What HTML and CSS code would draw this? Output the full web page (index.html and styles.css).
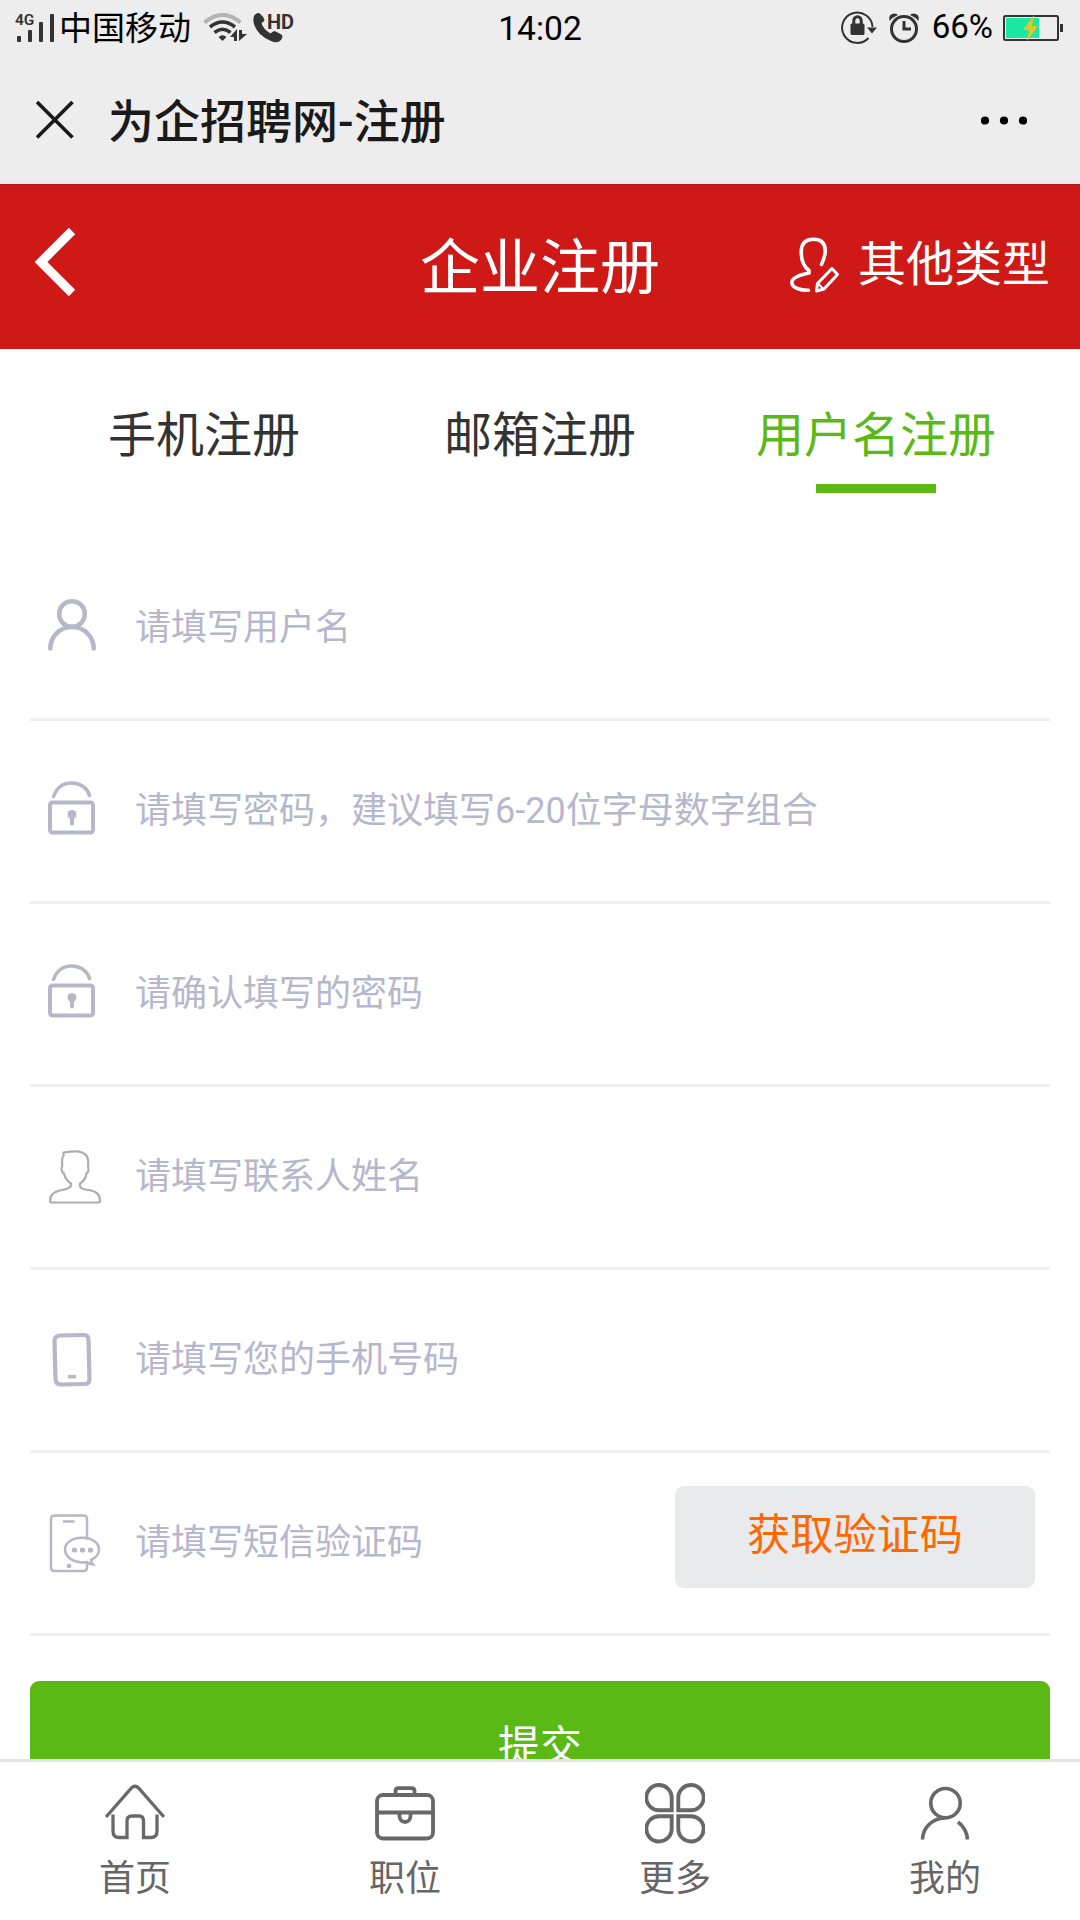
FILE: index.html
```html
<!DOCTYPE html>
<html lang="zh-CN">
<head>
<meta charset="utf-8">
<title>为企招聘网-注册</title>
<link rel="stylesheet" href="styles.css">
</head>
<body>
<div class="screen">
  <div class="status">
    <div class="status-left">
      <div class="signal">
        <span class="net">4G</span>
        <svg width="40" height="32" viewBox="0 0 40 32" fill="#333"><rect x="2" y="24" width="4" height="6" rx="1"/><rect x="13" y="18" width="4" height="12" rx="1"/><rect x="24" y="10" width="4" height="20" rx="1"/><rect x="35" y="2" width="4" height="28" rx="1"/></svg>
      </div>
      <span class="carrier">中国移动</span>
      <svg class="wifi" width="46" height="30" viewBox="0 0 46 30" fill="none">
        <path d="M1.500 9.500Q19.500-5.500 37.500 9.500" stroke="#b3b3b3" stroke-width="4"/>
        <path d="M7 14Q19.500 4 32 14" stroke="#333" stroke-width="3.600"/>
        <path d="M11.500 19.500Q19.500 13 27.500 19.500" stroke="#333" stroke-width="3.600"/>
        <path d="M15.500 24Q19.500 20.500 23.500 24L19.500 28Z" fill="#333"/>
        <path d="M27 24l7-8v12h-3v-4zM36 28V17h3v4h5z" fill="#333"/>
      </svg>
      <div class="call">
        <svg width="32" height="30" viewBox="0 0 32 30" fill="#333"><path d="M1.500 2Q5-1 7 .7Q11 4 11.500 7Q11 9 8.500 10Q10 16 17.500 20.500Q19 18.500 21.500 18Q26 20 29 22Q30 24 28 27Q24 31 18 28Q3 22 .5 9Q0 4 1.500 2Z"/></svg>
        <span class="hd">HD</span>
      </div>
    </div>
    <span class="clock">14:02</span>
    <div class="status-right">
      <svg class="rotate" width="38" height="36" viewBox="0 0 38 36" fill="none" stroke="#333" stroke-width="2">
        <path d="M32.500 18A15.200 15.200 0 1 0 28.500 29"/>
        <path d="M27 18.500h10l-5 6z" fill="#333" stroke="none"/>
        <rect x="10.500" y="14.500" width="14" height="11.500" rx="1.500" fill="#333" stroke="none"/>
        <path d="M13.800 15v-3.500a3.700 3.700 0 0 1 7.400 0V15" stroke-width="3"/>
      </svg>
      <svg class="alarm" width="32" height="32" viewBox="0 0 32 32" fill="none" stroke="#333">
        <circle cx="16" cy="17" r="12.500" stroke-width="3"/>
        <path d="M1.500 9Q0 2 6 1.500Q9 1.500 10 3Q5 5 1.500 9ZM30.500 9Q32 2 26 1.500Q23 1.500 22 3Q27 5 30.500 9Z" fill="#333" stroke="none"/>
        <path d="M16 9v8h7" stroke-width="3"/>
      </svg>
      <span class="percent">66%</span>
      <svg class="battery" width="61" height="28" viewBox="0 0 61 28">
        <rect x="1" y="2" width="54" height="24" rx="1.500" fill="none" stroke="#333" stroke-width="2"/>
        <rect x="3" y="4" width="33" height="20" fill="#1ae9a3"/>
        <path d="M31 1L20 16h6l-2 11 11-15h-6z" fill="#e6c626"/>
        <rect x="57" y="10" width="3" height="8" fill="#333"/>
      </svg>
    </div>
  </div>

  <div class="webbar">
    <svg class="close" width="38" height="38" viewBox="0 0 38 38" stroke="#1a1a1a" stroke-width="3.600"><path d="M1 1L36.500 36.500M36.500 1L1 36.500"/></svg>
    <span class="page-title">为企招聘网-注册</span>
    <svg class="more" width="46" height="9" viewBox="0 0 46 9"><circle cx="4" cy="4.500" r="4.100"/><circle cx="23" cy="4.500" r="4.100"/><circle cx="42" cy="4.500" r="4.100"/></svg>
  </div>

  <header class="header">
    <svg class="back" width="42" height="70" viewBox="0 0 42 70" fill="none" stroke="#fff" stroke-width="9"><path d="M38 4L7 35L38 66"/></svg>
    <h1 class="header-title">企业注册</h1>
    <div class="types">
      <svg width="50" height="56" viewBox="0 0 50 56" fill="none" stroke="#fff" stroke-width="3.600" stroke-linecap="round" stroke-linejoin="round">
        <path d="M31.500 27.500C34 22 35.300 19 35.300 13.500C35 5 30 2.200 23.500 2.200C16 2.200 11.500 6 11.300 14C11 22 13 29 19 33.500V36C9 38 2 41 1.800 45.500C2 51 11 53.500 18.500 53.300"/>
        <path d="M27.500 46.500L42 31.500L47.500 37.500L34 52L26.500 54Z" stroke-width="3"/>
        <path d="M28.500 47L33 51.500" stroke-width="2"/>
      </svg>
      <span>其他类型</span>
    </div>
  </header>

  <nav class="tabs">
    <a class="tab">手机注册</a>
    <a class="tab">邮箱注册</a>
    <a class="tab tab-active">用户名注册</a>
  </nav>

  <main class="form">
    <div class="field">
      <svg class="icon" width="60" height="64" viewBox="0 0 60 64" fill="none" stroke="#b6b7c8" stroke-width="4.500" stroke-linecap="round"><circle cx="27" cy="18" r="12.800"/><path d="M5.300 52.500C5.500 40 15 31 27 31S48.500 40 48.700 52.500"/></svg>
      <span>请填写用户名</span>
    </div>
    <div class="field">
      <svg class="icon" width="60" height="64" viewBox="0 0 60 64" fill="none" stroke="#b6b7c8" stroke-linecap="round"><path d="M8.500 17.500C12 8 19 4 26.500 4S42 8 44.500 16.500" stroke-width="3.500"/><rect x="5" y="23.500" width="43" height="30" rx="2.500" stroke-width="4"/><circle cx="27" cy="35.500" r="4.500" fill="#b6b7c8" stroke="none"/><path d="M27 36.500v8" stroke-width="4"/></svg>
      <span>请填写密码，建议填写6-20位字母数字组合</span>
    </div>
    <div class="field">
      <svg class="icon" width="60" height="64" viewBox="0 0 60 64" fill="none" stroke="#b6b7c8" stroke-linecap="round"><path d="M8.500 17.500C12 8 19 4 26.500 4S42 8 44.500 16.500" stroke-width="3.500"/><rect x="5" y="23.500" width="43" height="30" rx="2.500" stroke-width="4"/><circle cx="27" cy="35.500" r="4.500" fill="#b6b7c8" stroke="none"/><path d="M27 36.500v8" stroke-width="4"/></svg>
      <span>请确认填写的密码</span>
    </div>
    <div class="field">
      <svg class="icon" width="60" height="64" viewBox="0 -2 60 64" fill="none" stroke="#b3abab" stroke-width="2.200" stroke-linejoin="round"><path d="M18.500 5.500L18.500 9C16.500 11 17 15 17.300 19C15.500 21 16.500 25 19 26.500C20 31 23 34.500 26 36.500C27 41 22 42 17 43C8 45 5 48 5 54Q5 55.500 7 55.500H53Q55 55.500 55 54C55 47 51 44.500 44 43C37 42 34 41 35 36.500C39 34 41 30 41.500 26.500C43.500 25 44 22 43 19C43.500 15 42.500 10 41 8C36 3 28 4 18.500 5.500Z"/></svg>
      <span>请填写联系人姓名</span>
    </div>
    <div class="field">
      <svg class="icon" width="60" height="64" viewBox="0 -2 60 64" fill="none" stroke="#b6b7c8"><path d="M15 5.500L39 5Q43.500 5 43.500 10L44.500 49Q44.500 54 39.500 54L16 54.500Q11 54.500 10.500 49.500L9.500 11Q9.500 6 15 5.500Z" stroke-width="4.200"/><path d="M23 46.700h8" stroke-width="3.500"/></svg>
      <span>请填写您的手机号码</span>
    </div>
    <div class="field">
      <svg class="icon" width="60" height="64" viewBox="0.500 -1.500 60 64" fill="none" stroke="#b6b7c8" stroke-width="2.500"><path d="M42.500 27V6.500Q42.500 3 39 3H10Q6.500 3 6.500 6.500V55Q6.500 58.500 10 58.500H39Q42.500 58.500 42.500 55V50"/><path d="M18.500 9h11.500"/><path d="M43 49.500C29 52 20.500 44 20.500 37C20.500 30 28 25.300 38 25.300C47 25.300 54.500 30 54.500 37C54.500 41 52 45 46.500 47.500Q47 50 48.500 52Q45 52 43 49.500Z"/><g fill="#b6b7c8" stroke="none"><circle cx="30" cy="37.500" r="2.600"/><circle cx="38" cy="37.500" r="2.600"/><circle cx="46" cy="37.500" r="2.600"/><circle cx="24.500" cy="53.500" r="2.300"/></g></svg>
      <span class="grow">请填写短信验证码</span>
      <button class="code">获取验证码</button>
    </div>
    <button class="submit">提交</button>
  </main>

  <nav class="dock">
    <a class="dock-item">
      <svg width="60" height="62" viewBox="0 0 60 62" fill="none" stroke="#686868" stroke-width="3.300"><path d="M1 34L26.500 5Q30 1.500 33.500 5L59 34"/><path d="M8 31.500V48Q8 54.500 14 54.500H22V38Q22 33 27 33H34Q38.500 33 38.500 38V54.500H46Q52 54.500 52 48V31.500"/></svg>
      <span>首页</span>
    </a>
    <a class="dock-item">
      <svg width="60" height="62" viewBox="0 0 60 62" fill="none" stroke="#686868" stroke-width="3.800"><rect x="2" y="12" width="56" height="43.500" rx="6"/><path d="M20.500 11V8Q20.500 5.200 23.500 5.200H36.500Q39.500 5.200 39.500 8V11M2 29.500H58M24.500 30V33C24.500 41 35.500 41 35.500 33V30"/></svg>
      <span>职位</span>
    </a>
    <a class="dock-item">
      <svg width="60" height="62" viewBox="0 0 60 62" fill="none" stroke="#686868" stroke-width="3.900"><path d="M26.700 27.200H14.500A12.700 12.600 0 1 1 26.700 14.500ZM33.300 27.200H45.500A12.700 12.600 0 1 0 33.300 14.500ZM26.700 33.300H14.500A12.700 12.600 0 1 0 26.700 46ZM33.300 33.300H45.500A12.700 12.600 0 1 1 33.300 46Z"/></svg>
      <span>更多</span>
    </a>
    <a class="dock-item">
      <svg width="60" height="62" viewBox="0 0 60 62" fill="none" stroke="#686868" stroke-width="3.600"><circle cx="30.500" cy="20.200" r="14.700"/><path d="M7.500 56.500C8 44.500 17 35.500 29.500 35M43 39C49 43.500 52 49.500 52.500 56.500"/></svg>
      <span>我的</span>
    </a>
  </nav>
</div>
</body>
</html>
```
FILE: styles.css
```css
* { box-sizing: border-box; }
body {
  margin: 0;
  font-family: Roboto, "Noto Sans CJK SC", sans-serif;
  background: #fff;
}
svg { display: block; flex: none; }
button { border: 0; padding: 0; font-family: inherit; }

.screen {
  width: 1080px;
  height: 1920px;
  overflow: hidden;
  display: flex;
  flex-direction: column;
}

.status {
  height: 56px;
  flex: none;
  background: #ededed;
  display: grid;
  grid-template-columns: 1fr auto 1fr;
  align-items: center;
  color: #000;
  font-size: 33px;
  line-height: 40px;
}
.status-left { display: flex; align-items: center; padding-left: 15px; }
.signal { position: relative; width: 44px; }
.signal svg { margin-top: -1px; }
.net {
  position: absolute;
  left: 0;
  top: -1px;
  font-size: 15.5px;
  line-height: 16px;
  font-weight: 600;
  color: #333;
}
.carrier { width: 132px; padding-top: 2px; white-space: nowrap; }
.wifi { margin-left: 12px; }
.call { position: relative; margin-left: 4px; }
.hd {
  position: absolute;
  left: 14px;
  top: -3px;
  font-size: 20px;
  line-height: 24px;
  font-weight: 700;
  color: #333;
}
.clock { padding-top: 1px; font-size: 33.6px; }
.status-right { display: flex; align-items: center; justify-content: flex-end; padding-right: 16px; }
.rotate { margin-top: -2px; }
.alarm { margin: -1px 0 0 10px; }
.percent { margin: -2px 10px 0 12px; }
.battery { margin-top: -1px; }

.webbar {
  height: 128px;
  flex: none;
  background: #ededed;
  display: flex;
  align-items: center;
  padding: 0 53px 0 36px;
}
.page-title { flex: 1; margin-left: 34px; padding-top: 3px; font-size: 46px; line-height: 60px; font-weight: 500; color: #1a1a1a; }

.header {
  height: 165px;
  flex: none;
  background: #ce1917;
  border-top: 1px solid #b51a1a;
  color: #fff;
  display: grid;
  grid-template-columns: 1fr auto 1fr;
  align-items: center;
  padding: 0 30px;
}
.back { margin: 0 0 10px 4px; }
.header-title { margin: 0; padding-top: 4px; font-size: 60px; line-height: 80px; font-weight: 400; }
.types { display: flex; align-items: center; justify-content: flex-end; gap: 18px; padding-bottom: 4px; font-size: 48px; line-height: 60px; }

.tabs { height: 189px; flex: none; display: flex; padding: 0 36px; }
.tab {
  flex: 1;
  display: flex;
  flex-direction: column;
  align-items: center;
  padding-top: 52px;
  font-size: 48px;
  line-height: 70px;
  color: #333;
}
.tab-active { color: #5ab914; }
.tab-active::after { content: ""; width: 120px; height: 9px; margin-top: 13px; background: #5ab914; }

.form { flex: 1; min-height: 0; overflow: hidden; padding: 0 30px; }
.field {
  height: 183px;
  border-bottom: 3px solid #eee;
  display: flex;
  align-items: center;
  padding: 0 15px;
  font-size: 36px;
  line-height: 50px;
  color: #b6b7cd;
}
.icon { margin-right: 30px; }
.grow { flex: 1; }
.code {
  width: 360px;
  height: 102px;
  margin-bottom: 12px;
  padding-bottom: 12px;
  border-radius: 9px;
  background: #e9eaec;
  color: #ff6700;
  font-size: 43.2px;
}
.submit {
  display: block;
  width: 100%;
  height: 126px;
  margin-top: 45px;
  padding-bottom: 4px;
  border-radius: 9px;
  background: #5ab914;
  color: #fff;
  font-size: 42px;
}

.dock {
  height: 161px;
  flex: none;
  background: #fff;
  border-top: 3px solid #e5e5e5;
  display: flex;
}
.dock-item {
  flex: 1;
  display: flex;
  flex-direction: column;
  align-items: center;
  padding-top: 21px;
  font-size: 36px;
  line-height: 50px;
  color: #666;
}
.dock-item span { margin-top: 9px; }
```
